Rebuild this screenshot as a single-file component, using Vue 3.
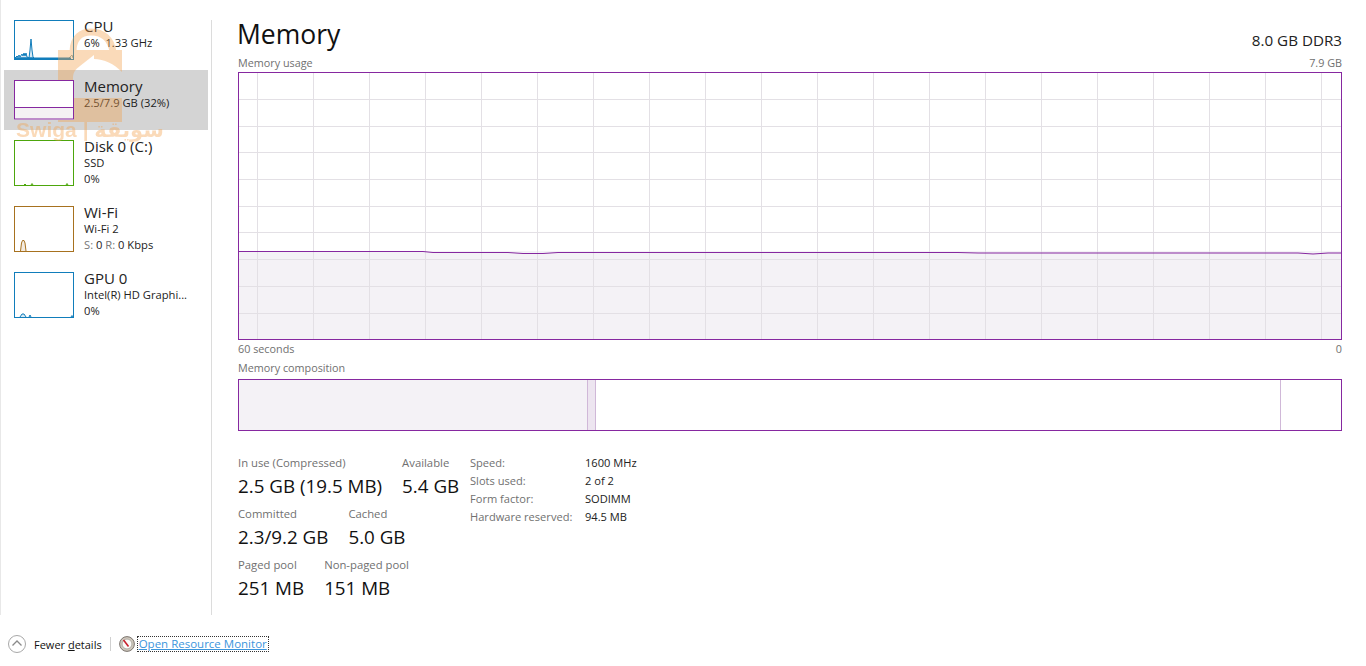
<script setup>
const vLines = Array.from({ length: 20 }, (_, i) => 19.5 + i * 56)
const hLines = [27.5, 54.5, 80.5, 107.5, 134.5, 160.5, 187.5, 214.5, 241.5]

const stats = [
  [{ label: 'In use (Compressed)', value: '2.5 GB (19.5 MB)' }, { label: 'Available', value: '5.4 GB' }],
  [{ label: 'Committed', value: '2.3/9.2 GB' }, { label: 'Cached', value: '5.0 GB' }],
  [{ label: 'Paged pool', value: '251 MB' }, { label: 'Non-paged pool', value: '151 MB' }]
]

const specs = [
  ['Speed:', '1600 MHz'],
  ['Slots used:', '2 of 2'],
  ['Form factor:', 'SODIMM'],
  ['Hardware reserved:', '94.5 MB']
]
</script>

<template>
  <div class="window">
    <div class="main">
      <aside class="sidebar">
        <div class="item">
          <svg class="thumb" width="60" height="40" viewBox="0 0 60 40">
            <path d="M1 38 L3 36 L4 37 L5 35 L6 37 L8 34 L9 36 L10 33 L11 36 L12 33 L13 37 L15 38 L16 30 L17 19 L18 30 L19 37 L20 38 Z" fill="#d9eaf4" stroke="#117dbb" stroke-width="1" />
            <path d="M55 38 L58 35 L59 38" fill="none" stroke="#8fa8a8" />
            <path d="M1 38.5 H57" stroke="#117dbb" stroke-width="2" />
            <rect x="0.5" y="0.5" width="59" height="39" fill="none" stroke="#117dbb" />
          </svg>
          <div class="info">
            <div class="name">CPU</div>
            <div class="sub">6%&nbsp; 1.33 GHz</div>
          </div>
        </div>
        <div class="item selected">
          <svg class="thumb" width="60" height="40" viewBox="0 0 60 40">
            <rect x="0" y="0" width="60" height="27" fill="#fff" />
            <rect x="0" y="27" width="60" height="13" fill="#f4f2f4" />
            <path d="M0 27.5 H60" stroke="#8628a0" />
            <rect x="0.5" y="0.5" width="59" height="38.5" fill="none" stroke="#8628a0" />
          </svg>
          <div class="info">
            <div class="name">Memory</div>
            <div class="sub">2.5/7.9 GB (32%)</div>
          </div>
        </div>
        <div class="item">
          <svg class="thumb" width="60" height="46" viewBox="0 0 60 46">
            <path d="M10 45 L11 44 L12 45 M17 45 L18 43.5 L19 45 M52 45 L53 43.5 L54 45" fill="none" stroke="#4da60c" />
            <rect x="0.5" y="0.5" width="59" height="45" fill="none" stroke="#4da60c" />
          </svg>
          <div class="info">
            <div class="name">Disk 0 (C:)</div>
            <div class="sub">SSD</div>
            <div class="sub">0%</div>
          </div>
        </div>
        <div class="item">
          <svg class="thumb" width="60" height="46" viewBox="0 0 60 46">
            <path d="M6.5 45 L7.5 37 L8.5 34.5 L10 34.5 L11 37 L12 45" fill="#f4ebe0" stroke="#a7711f" />
            <rect x="0.5" y="0.5" width="59" height="45" fill="none" stroke="#a7711f" />
          </svg>
          <div class="info">
            <div class="name">Wi-Fi</div>
            <div class="sub">Wi-Fi 2</div>
            <div class="sub"><span class="dim">S:</span> 0 <span class="dim">R:</span> 0 Kbps</div>
          </div>
        </div>
        <div class="item">
          <svg class="thumb" width="60" height="46" viewBox="0 0 60 46">
            <path d="M6 45 L8 42 L10 42 L12 45 M15 45 L16 43 L17 45 M57 45 L58 43.5 L59 45" fill="#d9eaf4" stroke="#117dbb" />
            <rect x="0.5" y="0.5" width="59" height="45" fill="none" stroke="#117dbb" />
          </svg>
          <div class="info">
            <div class="name">GPU 0</div>
            <div class="sub">Intel(R) HD Graphi...</div>
            <div class="sub">0%</div>
          </div>
        </div>
      </aside>

      <section class="content">
        <div class="head">
          <h1>Memory</h1>
          <span class="model">8.0 GB DDR3</span>
        </div>
        <div class="caption row"><span>Memory usage</span><span>7.9 GB</span></div>
        <svg class="chart" width="1104" height="268" viewBox="0 0 1104 268">
          <rect x="0" y="179" width="1104" height="89" fill="#f4f2f6" />
          <path v-for="x in vLines" :key="x" :d="`M${x} 1 V267`" stroke="#e3e0e5" />
          <path v-for="y in hLines" :key="y" :d="`M1 ${y} H1103`" stroke="#e3e0e5" />
          <path d="M0 179.5 H185 L195 180.5 L270 180.5 L285 181.5 L305 181.5 L320 180.5 L720 180.5 L740 181 L1060 181 L1075 182 L1090 181 L1104 181" fill="none" stroke="#8628a0" />
          <rect x="0.5" y="0.5" width="1103" height="267" fill="none" stroke="#8628a0" />
        </svg>
        <div class="caption row under"><span>60 seconds</span><span>0</span></div>
        <div class="caption comp-title">Memory composition</div>
        <div class="composition">
          <div class="seg used"></div>
          <div class="seg modified"></div>
          <div class="seg standby"></div>
          <div class="seg free"></div>
        </div>
        <div class="details">
          <div class="stats">
            <div v-for="(row, i) in stats" :key="i" class="stat-row">
              <div v-for="s in row" :key="s.label" class="stat">
                <div class="stat-label">{{ s.label }}</div>
                <div class="stat-value">{{ s.value }}</div>
              </div>
            </div>
          </div>
          <div class="specs">
            <template v-for="s in specs" :key="s[0]">
              <span class="spec-label">{{ s[0] }}</span>
              <span class="spec-value">{{ s[1] }}</span>
            </template>
          </div>
        </div>
      </section>
    </div>

    <footer class="footer">
      <span class="chevron">
        <svg width="20" height="20" viewBox="0 0 20 20">
          <circle cx="10" cy="10" r="8.5" fill="#fff" stroke="#a8a8a8" />
          <path d="M5.5 11.5 L10 7 L14.5 11.5" fill="none" stroke="#8a8a8a" stroke-width="1.3" />
        </svg>
      </span>
      <span class="fewer">Fewer <u>d</u>etails</span>
      <span class="sep"></span>
      <svg class="gauge" width="16" height="16" viewBox="0 0 16 16">
        <circle cx="8" cy="8" r="7.4" fill="#cfc8bd" stroke="#6f6862" stroke-width="0.9" />
        <circle cx="8" cy="8" r="4.9" fill="#fbfaf8" stroke="#8f8981" stroke-width="0.6" />
        <path d="M4.5 4 L9.5 10.5" stroke="#c8202c" stroke-width="1.6" />
      </svg>
      <a class="link">Open Resource Monitor</a>
    </footer>

    <div class="watermark">
      <svg width="64" height="94" viewBox="0 0 64 94">
        <mask id="bag-cut">
          <rect width="64" height="94" fill="#fff" />
          <path d="M15 50 C15 44 18 41 22 38 L36 27 L36 31 C46 31 56 36 64 44 L64 70 L15 70 Z" fill="#000" />
        </mask>
        <path d="M15 24 C15 9 24 4 33 4 C45 4 53 11 55 24" fill="none" stroke="#f3a04a" stroke-width="7" />
        <rect y="22" width="64" height="72" fill="#f3a04a" mask="url(#bag-cut)" />
      </svg>
      <div class="wm-text">Swiga | سويقة</div>
    </div>
  </div>
</template>

<style scoped>
.window {
  position: relative;
  width: 1366px;
  height: 666px;
  overflow: hidden;
  background: #fff;
  font-family: "Open Sans", "Noto Sans", sans-serif;
  color: #111;
}

.main {
  display: flex;
  height: 615px;
  border-left: 1px solid #e8e8e8;
  box-sizing: border-box;
}

.sidebar {
  position: relative;
  width: 211px;
  padding: 10px 3px 0 3px;
  box-sizing: border-box;
  flex-shrink: 0;
}

.sidebar::after {
  content: "";
  position: absolute;
  right: 0;
  top: 20px;
  bottom: 0;
  width: 1px;
  background: #dcdcdc;
}

.item {
  display: flex;
  gap: 10px;
  padding: 10px;
  width: 204px;
  box-sizing: border-box;
}

.item.selected {
  background: #d4d4d4;
}

.thumb {
  flex-shrink: 0;
  display: block;
  background: #fff;
}

.selected .thumb {
  position: relative;
  z-index: 2;
}

.info {
  margin: -2px 0 -3px;
  white-space: nowrap;
}

.name {
  font-size: 15px;
  line-height: 17px;
  color: #222;
}

.sub {
  font-size: 11.2px;
  line-height: 16px;
  color: #222;
}

.dim {
  color: #777;
}

.content {
  flex: 1;
  padding: 0 24px 0 26px;
  min-width: 0;
}

.head {
  display: flex;
  justify-content: space-between;
  align-items: flex-end;
  height: 55px;
  padding-bottom: 3px;
  box-sizing: border-box;
}

h1 {
  margin: 0 0 0 -1px;
  font-size: 26.5px;
  font-weight: 400;
  line-height: 36px;
  color: #111;
}

.model {
  font-size: 15.2px;
  color: #222;
  line-height: 20px;
  margin-bottom: 2px;
}

.caption {
  font-size: 10.8px;
  line-height: 16px;
  color: #707070;
}

.row {
  display: flex;
  justify-content: space-between;
  height: 17px;
}

.chart {
  display: block;
}

.under {
  margin-top: 1px;
  height: 20px;
}

.comp-title {
  height: 19px;
  margin-top: -1px;
}

.composition {
  display: flex;
  width: 1104px;
  height: 52px;
  border: 1px solid #8628a0;
  box-sizing: border-box;
}

.seg.used {
  width: 348px;
  background: #f4f2f6;
}

.seg.modified {
  width: 9px;
  background: #ede5f0;
  border-left: 1px solid #d0b8d8;
  border-right: 1px solid #d0b8d8;
  box-sizing: border-box;
}

.seg.standby {
  width: 684px;
  border-right: 1px solid #d0b8d8;
  box-sizing: content-box;
}

.seg.free {
  flex: 1;
}

.details {
  display: flex;
  margin-top: 24px;
}

.stats {
  width: 232px;
}

.stat-row {
  display: flex;
  gap: 20px;
  height: 51px;
  white-space: nowrap;
}

.stat-label {
  font-size: 11.3px;
  line-height: 16px;
  color: #707070;
}

.stat-value {
  font-size: 18.8px;
  line-height: 30px;
  color: #111;
}

.specs {
  display: grid;
  grid-template-columns: 115px auto;
  grid-auto-rows: 18px;
  font-size: 11.1px;
  line-height: 16px;
  align-self: flex-start;
}

.spec-label {
  color: #707070;
}

.spec-value {
  color: #222;
}

.footer {
  display: flex;
  align-items: center;
  height: 51px;
  padding: 7px 0 0 7px;
  box-sizing: border-box;
  font-size: 11px;
}

.chevron {
  display: flex;
  width: 27px;
}

.fewer {
  color: #111;
}

.sep {
  width: 1px;
  height: 14px;
  background: #d0d0d0;
  margin: 0 8px;
}

.gauge {
  margin-right: 3px;
}

.link {
  color: #3b95dc;
  text-decoration: underline;
  outline: 1px dotted #333;
  padding: 0 1px;
  font-size: 11.5px;
  line-height: 14px;
}

.watermark {
  position: absolute;
  z-index: 1;
  left: 17px;
  top: 28px;
  width: 146px;
  display: flex;
  flex-direction: column;
  align-items: center;
  opacity: 0.38;
  pointer-events: none;
}

.wm-text {
  font-family: "Liberation Sans", "DejaVu Sans", sans-serif;
  font-size: 21px;
  font-weight: 700;
  line-height: 15px;
  color: #f3a04a;
  white-space: nowrap;
}
</style>
